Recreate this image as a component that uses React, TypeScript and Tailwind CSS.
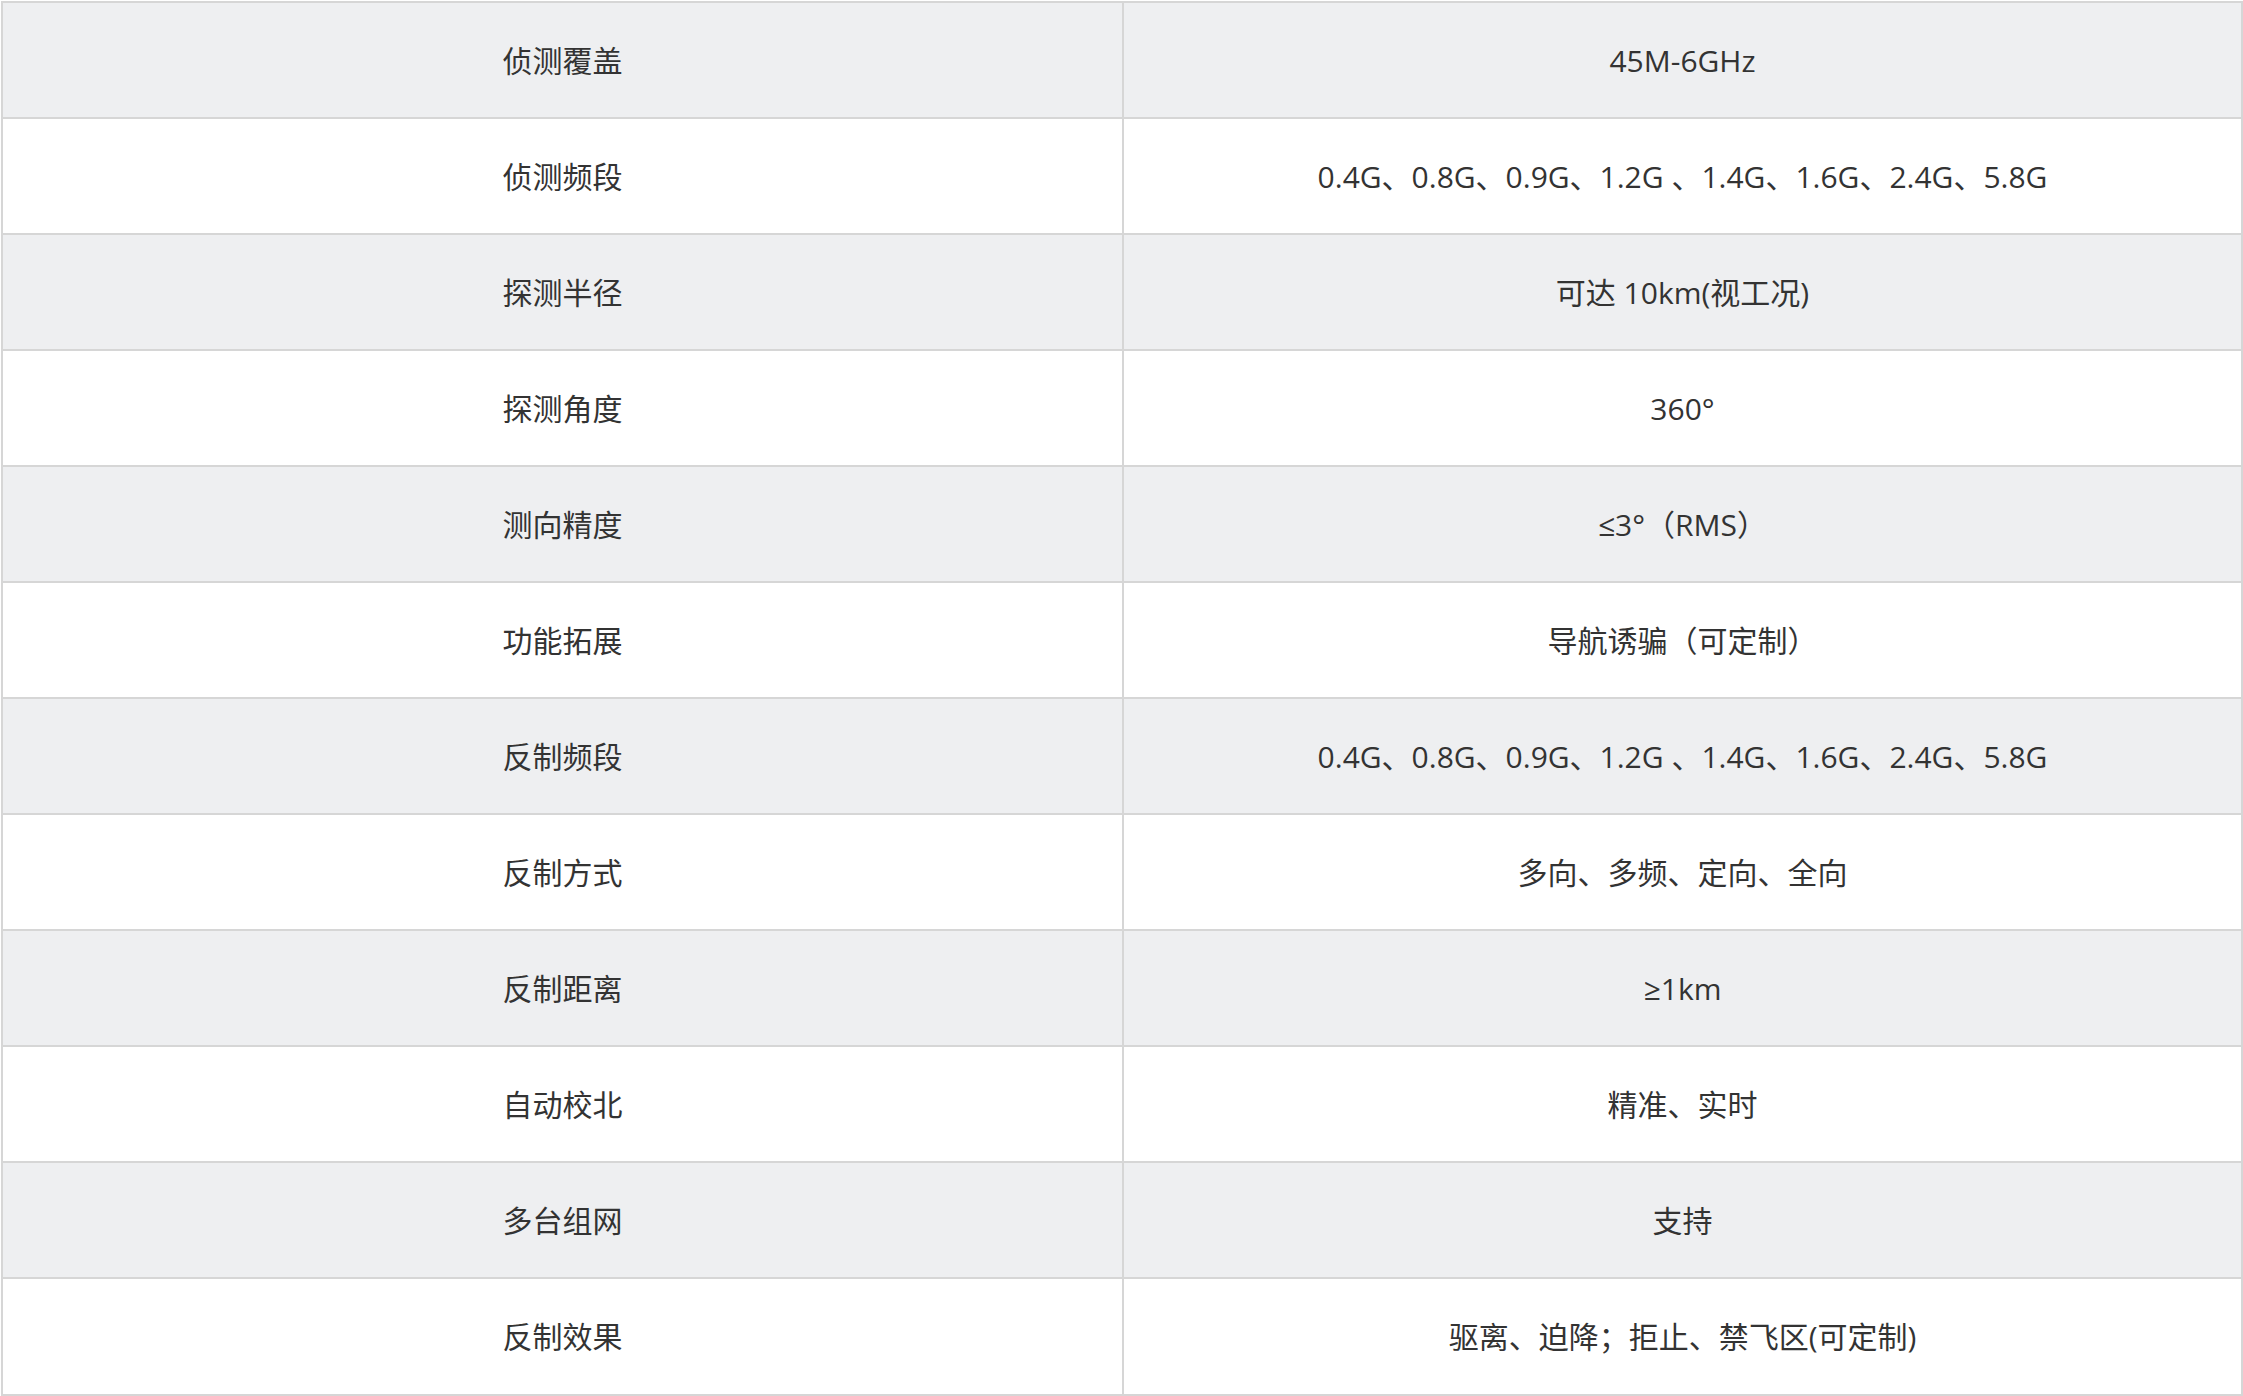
const specs: [string, string][] = [
  ["侦测覆盖", "45M-6GHz"],
  ["侦测频段", "0.4G、0.8G、0.9G、1.2G 、1.4G、1.6G、2.4G、5.8G"],
  ["探测半径", "可达 10km(视工况)"],
  ["探测角度", "360°"],
  ["测向精度", "≤3°（RMS）"],
  ["功能拓展", "导航诱骗（可定制）"],
  ["反制频段", "0.4G、0.8G、0.9G、1.2G 、1.4G、1.6G、2.4G、5.8G"],
  ["反制方式", "多向、多频、定向、全向"],
  ["反制距离", "≥1km"],
  ["自动校北", "精准、实时"],
  ["多台组网", "支持"],
  ["反制效果", "驱离、迫降；拒止、禁飞区(可定制)"],
];

const SpecRow = ({
  label,
  value,
  striped,
  last,
}: {
  label: string;
  value: string;
  striped: boolean;
  last: boolean;
}) => {
  return (
    <div
      className={`grid grid-cols-[1121px_1fr] ${
        striped ? "bg-[#eeeff1]" : "bg-white"
      } ${last ? "h-[115px]" : "h-[116px] border-b-2 border-[#d6d6d6]"}`}
    >
      <div className="flex items-center justify-center border-r-2 border-[#d6d6d6]">
        {label}
      </div>
      <div className="flex items-center justify-center">{value}</div>
    </div>
  );
};

export default function App() {
  return (
    <div className="w-[2243px] h-[1396px] bg-white pt-px pl-px overflow-hidden">
      <div
        className="w-[2242px] border-2 border-[#d6d6d6] text-[30px] text-[#333333]"
        style={{
          fontFamily: '"Open Sans", "Noto Sans CJK SC", sans-serif',
        }}
      >
        {specs.map(([label, value], i) => (
          <SpecRow
            key={label}
            label={label}
            value={value}
            striped={i % 2 === 0}
            last={i === specs.length - 1}
          />
        ))}
      </div>
    </div>
  );
}
